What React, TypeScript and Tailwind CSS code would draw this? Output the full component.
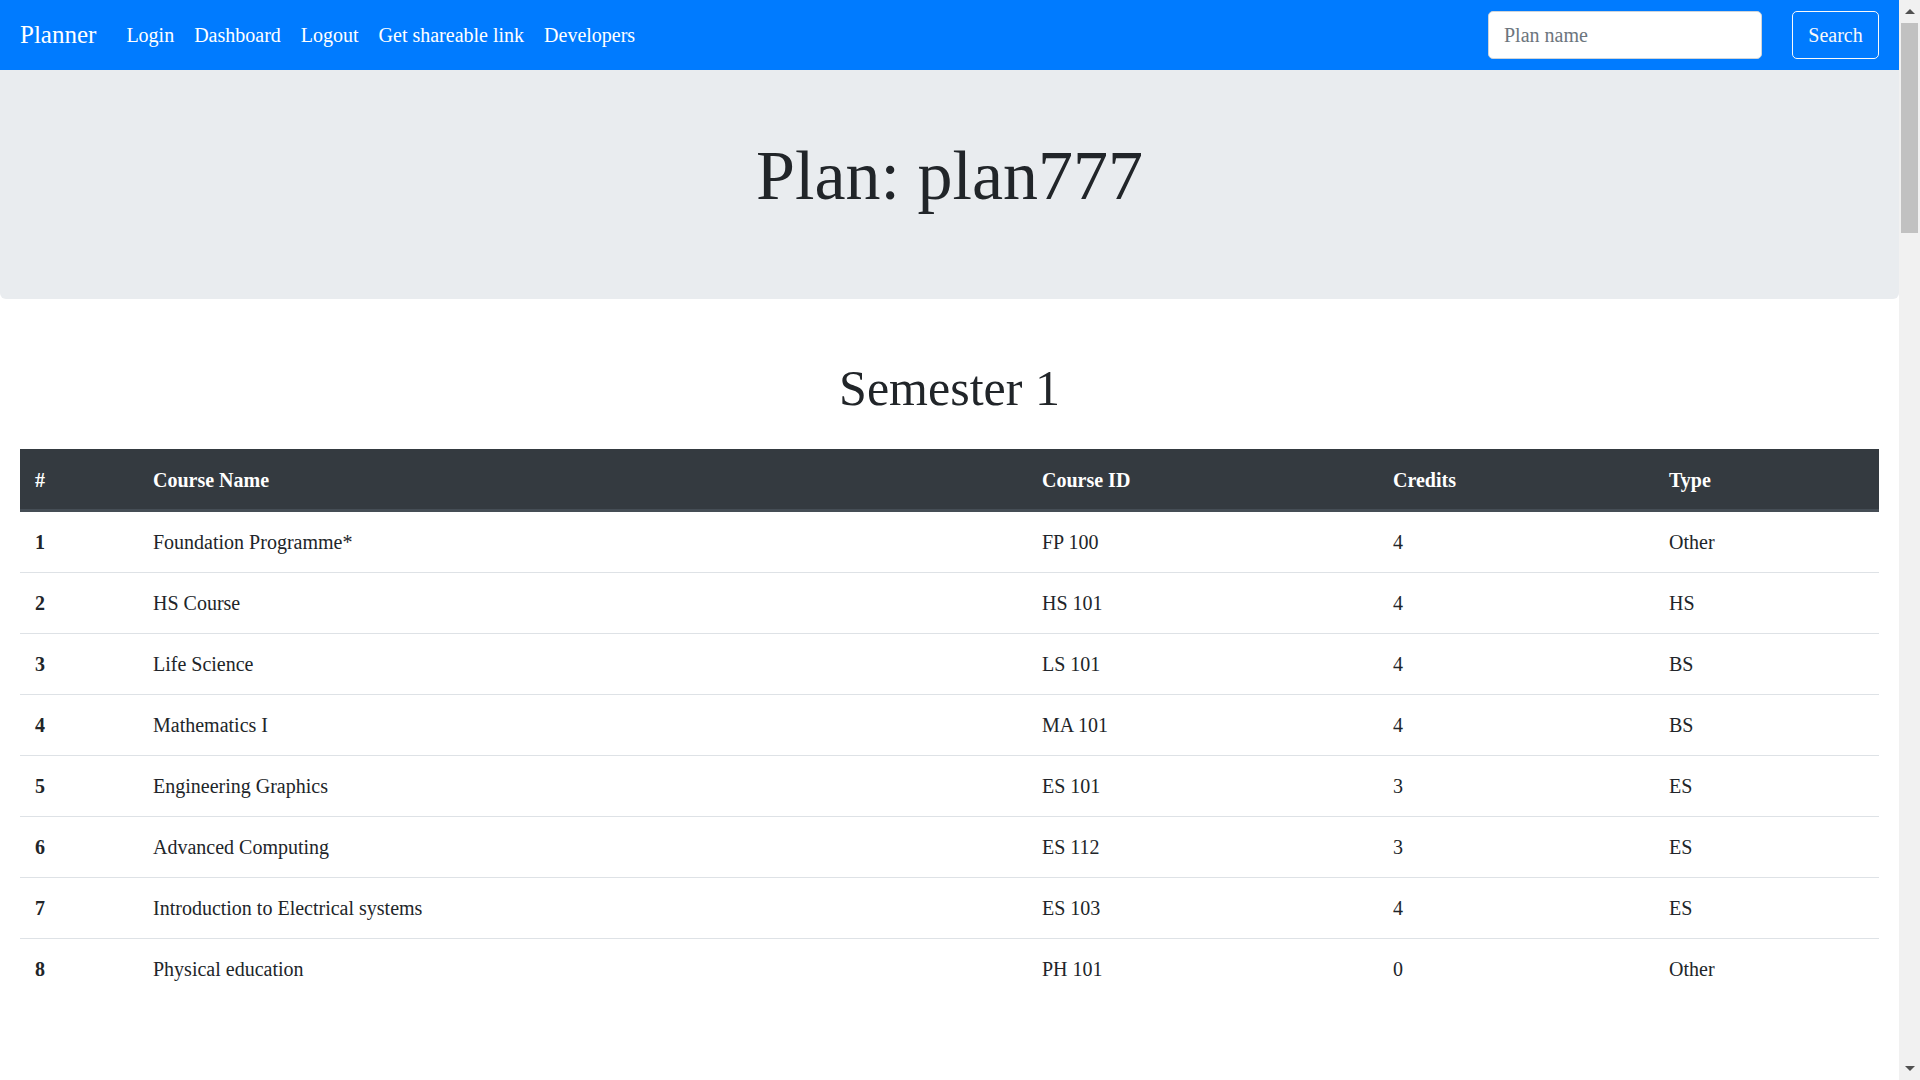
const courses = [
  { no: 1, name: 'Foundation Programme*', id: 'FP 100', credits: 4, type: 'Other' },
  { no: 2, name: 'HS Course', id: 'HS 101', credits: 4, type: 'HS' },
  { no: 3, name: 'Life Science', id: 'LS 101', credits: 4, type: 'BS' },
  { no: 4, name: 'Mathematics I', id: 'MA 101', credits: 4, type: 'BS' },
  { no: 5, name: 'Engineering Graphics', id: 'ES 101', credits: 3, type: 'ES' },
  { no: 6, name: 'Advanced Computing', id: 'ES 112', credits: 3, type: 'ES' },
  { no: 7, name: 'Introduction to Electrical systems', id: 'ES 103', credits: 4, type: 'ES' },
  { no: 8, name: 'Physical education', id: 'PH 101', credits: 0, type: 'Other' },
];

function Navbar() {
  return (
    <nav className="h-[70px] bg-[#007bff] flex items-center px-[20px]">
      <a href="#" className="text-[25px] leading-[38px] text-white mr-[20px]">Planner</a>
      <ul className="flex items-center">
        {['Login', 'Dashboard', 'Logout', 'Get shareable link', 'Developers'].map((item) => (
          <li key={item}>
            <a href="#" className="block px-[10px] text-[20px] leading-[30px] text-white">{item}</a>
          </li>
        ))}
      </ul>
      <form className="ml-auto flex items-center" onSubmit={(e) => e.preventDefault()}>
        <input
          type="search"
          placeholder="Plan name"
          className="w-[274px] h-[48px] rounded-[5px] border border-[#ced4da] bg-white px-[15px] text-[20px] text-[#495057] placeholder:text-[#6c757d] outline-none"
        />
        <button
          type="submit"
          className="ml-[30px] h-[48px] w-[87px] rounded-[5px] border border-[#f8f9fa] text-[20px] text-[#f8f9fa]"
        >
          Search
        </button>
      </form>
    </nav>
  );
}

function Scrollbar() {
  return (
    <div className="w-[21px] h-full bg-[#f1f1f1] flex flex-col items-center shrink-0">
      <div className="h-[23px] w-full flex items-center justify-center">
        <div className="w-0 h-0 border-x-[5px] border-x-transparent border-b-[5px] border-b-[#505050]" />
      </div>
      <div className="w-[17px] h-[210px] bg-[#c1c1c1]" />
      <div className="flex-1" />
      <div className="h-[23px] w-full flex items-center justify-center">
        <div className="w-0 h-0 border-x-[5px] border-x-transparent border-t-[5px] border-t-[#505050]" />
      </div>
    </div>
  );
}

export default function App() {
  return (
    <div className="h-screen w-full flex overflow-hidden bg-white text-[#212529]" style={{ fontFamily: '"Liberation Serif", "Times New Roman", serif' }}>
      <div className="flex-1 min-w-0 flex flex-col">
        <Navbar />

        {/* Jumbotron */}
        <div className="bg-[#e9ecef] rounded-b-[6px] pt-[64px] pb-[81px] text-center">
          <h1 className="text-[70px] leading-[84px] font-light">Plan: plan777</h1>
        </div>

        <div className="px-[20px]">
          <h2 className="mt-[59px] mb-[31px] text-center text-[50px] leading-[60px]">Semester 1</h2>

          <table className="w-full table-fixed border-collapse text-[20px] leading-[30px]">
            <colgroup>
              <col className="w-[118px]" />
              <col className="w-[889px]" />
              <col className="w-[351px]" />
              <col className="w-[276px]" />
              <col />
            </colgroup>
            <thead>
              <tr className="bg-[#343a40] text-white">
                {['#', 'Course Name', 'Course ID', 'Credits', 'Type'].map((h) => (
                  <th key={h} className="text-left font-bold px-[15px] pt-[16px] pb-[14px] border-b-[3px] border-[#454d55]">
                    {h}
                  </th>
                ))}
              </tr>
            </thead>
            <tbody>
              {courses.map((c, i) => (
                <tr key={c.no} className={i > 0 ? 'border-t border-[#dee2e6]' : ''}>
                  <td className="px-[15px] py-[15px] font-bold">{c.no}</td>
                  <td className="px-[15px] py-[15px]">{c.name}</td>
                  <td className="px-[15px] py-[15px]">{c.id}</td>
                  <td className="px-[15px] py-[15px]">{c.credits}</td>
                  <td className="px-[15px] py-[15px]">{c.type}</td>
                </tr>
              ))}
            </tbody>
          </table>
        </div>
      </div>
      <Scrollbar />
    </div>
  );
}
